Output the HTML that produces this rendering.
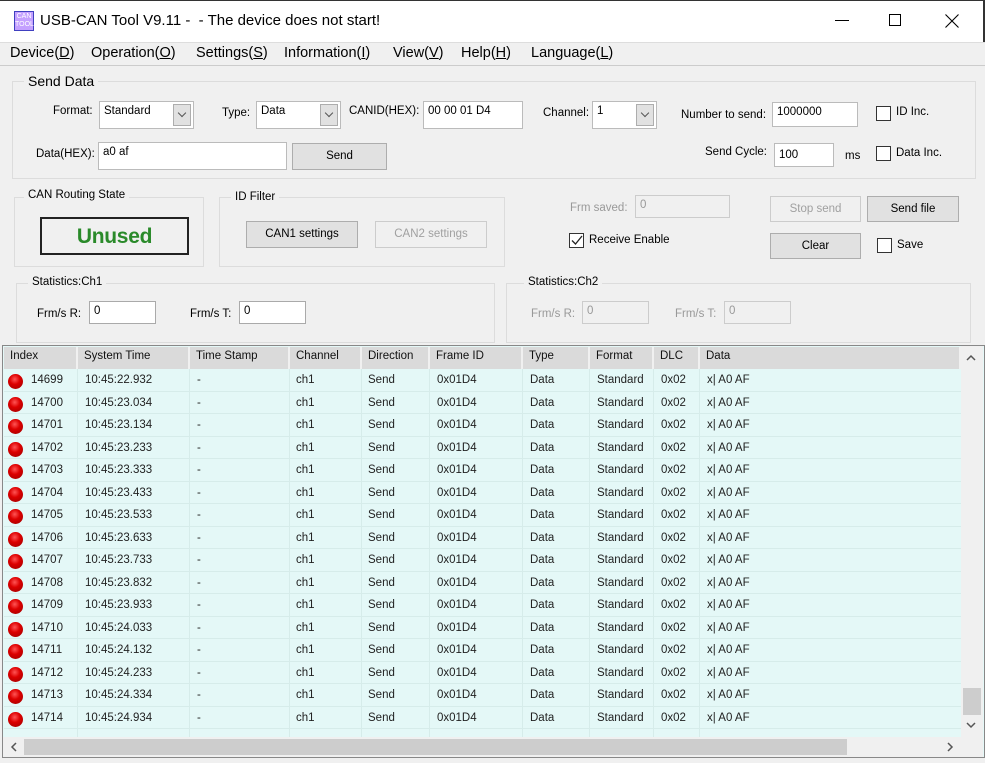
<!DOCTYPE html>
<html><head><meta charset="utf-8"><style>
*{box-sizing:border-box;margin:0;padding:0}
body{width:985px;height:763px;background:#f0f0f0;font-family:"Liberation Sans",Arial,sans-serif;font-size:12px;color:#000;position:relative;overflow:hidden}
.a{position:absolute;white-space:nowrap}
.t{font-size:11.5px}
.gb{position:absolute;border:1px solid #dcdcdc}
.gl{position:absolute;background:#f0f0f0;padding:0 4px;font-size:11.5px;white-space:nowrap}
.in{position:absolute;background:#fff;border:1px solid #7a7a7a;font-size:11.5px;padding:3px 4px;white-space:nowrap}
.dis{position:absolute;background:#f0f0f0;border:1px solid #ccc;color:#999;font-size:11.5px;padding:3px 4px}
.btn{position:absolute;background:#e1e1e1;border:1px solid #adadad;font-size:11.5px;text-align:center;white-space:nowrap}
.btnd{position:absolute;background:#f0f0f0;border:1px solid #ccc;color:#a0a0a0;font-size:11.5px;text-align:center}
.dd{position:absolute;top:2px;right:2px;width:18px;border:1px solid #adadad;background:#e1e1e1}
.dd:after{content:"";position:absolute;left:5px;top:5px;width:5px;height:5px;border-right:1px solid #555;border-bottom:1px solid #555;transform:rotate(45deg)}
.cb{position:absolute;width:15px;height:15px;border:1px solid #333;background:#fff}
.row{position:absolute;left:4px;width:957px;height:22.5px;border-bottom:1px solid #d6ecea;font-size:11.5px;color:#222}
.row span{position:absolute;top:5px}
.dot{position:absolute;left:4px;top:5px;width:15px;height:15px;border-radius:50%;background:radial-gradient(circle at 45% 35%,#f55 0,#d00 40%,#900 100%)}
.hd{position:absolute;top:347px;height:22px;background:#dadada;font-size:11.5px;color:#111;padding:3px 6px;border-right:2px solid #f0f0f0}
</style></head><body>
<div class="a" style="left:0;top:0;width:985px;height:42px;background:#fff;border-top:1px solid #333;border-right:2px solid #333"></div>
<div class="a" style="left:14px;top:11px;width:20px;height:20px;background:#c4a0ff;border:1px solid #4040c0;font-size:7px;color:#fff;line-height:8px;text-align:center;padding-top:1px">CAN<br>TOOL</div>
<div class="a" style="left:40px;top:12px;font-size:15px">USB-CAN Tool V9.11 -&nbsp; - The device does not start!</div>
<div class="a" style="left:835px;top:20px;width:14px;height:1px;background:#000"></div>
<div class="a" style="left:889px;top:14px;width:12px;height:12px;border:1px solid #000"></div>
<svg class="a" style="left:945px;top:14px" width="14" height="14"><path d="M0.5 0.5L13.5 13.5M13.5 0.5L0.5 13.5" stroke="#000" stroke-width="1.1"/></svg>
<div class="a" style="left:0;top:42px;width:985px;height:24px;background:#f0f0f0;border-top:1px solid #ddd;border-bottom:1px solid #ccc"></div>
<div class="a" style="left:10px;top:45px;font-size:14.5px;word-spacing:0">Device(<u>D</u>)</div>
<div class="a" style="left:91px;top:45px;font-size:14.5px">Operation(<u>O</u>)</div>
<div class="a" style="left:196px;top:45px;font-size:14.5px">Settings(<u>S</u>)</div>
<div class="a" style="left:284px;top:45px;font-size:14.5px">Information(<u>I</u>)</div>
<div class="a" style="left:393px;top:45px;font-size:14.5px">View(<u>V</u>)</div>
<div class="a" style="left:461px;top:45px;font-size:14.5px">Help(<u>H</u>)</div>
<div class="a" style="left:531px;top:45px;font-size:14.5px">Language(<u>L</u>)</div>

<div class="gb" style="left:12px;top:81px;width:964px;height:98px"></div>
<div class="gl" style="left:24px;top:73px;font-size:14px">Send Data</div>
<div class="a t" style="left:53px;top:105px">Format:</div>
<div class="in" style="left:99px;top:101px;width:95px;height:28px;border-color:#bbb">Standard<div class="dd" style="height:22px"></div></div>
<div class="a t" style="left:222px;top:107px">Type:</div>
<div class="in" style="left:256px;top:101px;width:85px;height:28px;border-color:#bbb">Data<div class="dd" style="height:22px"></div></div>
<div class="a t" style="left:349px;top:105px">CANID(HEX):</div>
<div class="in" style="left:423px;top:101px;width:100px;height:28px;border-color:#bbb">00 00 01 D4</div>
<div class="a t" style="left:543px;top:107px">Channel:</div>
<div class="in" style="left:592px;top:101px;width:65px;height:28px;border-color:#bbb">1<div class="dd" style="height:22px"></div></div>
<div class="a t" style="left:681px;top:109px">Number to send:</div>
<div class="in" style="left:772px;top:102px;width:86px;height:25px;border-color:#bbb">1000000</div>
<div class="cb" style="left:876px;top:106px"></div><div class="a t" style="left:896px;top:106px">ID Inc.</div>
<div class="a t" style="left:36px;top:148px">Data(HEX):</div>
<div class="in" style="left:98px;top:142px;width:189px;height:28px;border-color:#bbb">a0 af</div>
<div class="btn" style="left:292px;top:143px;width:95px;height:27px;padding-top:6px">Send</div>
<div class="a t" style="left:705px;top:146px">Send Cycle:</div>
<div class="in" style="left:774px;top:143px;width:60px;height:24px;border-color:#bbb;padding-top:5px">100</div>
<div class="a t" style="left:845px;top:150px">ms</div>
<div class="cb" style="left:876px;top:146px"></div><div class="a t" style="left:896px;top:147px">Data Inc.</div>

<div class="gb" style="left:14px;top:197px;width:190px;height:70px"></div>
<div class="gl" style="left:24px;top:189px">CAN Routing State</div>
<div class="a" style="left:40px;top:217px;width:149px;height:38px;border:2px solid #222;color:#2a8a2a;font-weight:bold;font-size:21px;text-align:center;padding-top:6px;font-family:'Liberation Sans',sans-serif;letter-spacing:-0.3px">Unused</div>
<div class="gb" style="left:219px;top:197px;width:286px;height:70px"></div>
<div class="gl" style="left:231px;top:191px">ID Filter</div>
<div class="btn" style="left:246px;top:221px;width:112px;height:27px;padding-top:6px">CAN1 settings</div>
<div class="btnd" style="left:375px;top:221px;width:112px;height:27px;padding-top:6px">CAN2 settings</div>

<div class="a t" style="left:570px;top:202px;color:#999">Frm saved:</div>
<div class="dis" style="left:635px;top:195px;width:95px;height:23px">0</div>
<div class="cb" style="left:569px;top:233px;border-color:#333"></div>
<svg class="a" style="left:571px;top:235px" width="12" height="11"><path d="M1 5.5L4.5 9L11 1" stroke="#222" stroke-width="1.3" fill="none"/></svg>
<div class="a t" style="left:589px;top:234px">Receive Enable</div>
<div class="btnd" style="left:770px;top:196px;width:91px;height:26px;padding-top:6px">Stop send</div>
<div class="btn" style="left:867px;top:196px;width:92px;height:26px;padding-top:6px">Send file</div>
<div class="btn" style="left:770px;top:233px;width:91px;height:26px;padding-top:6px">Clear</div>
<div class="cb" style="left:877px;top:238px"></div><div class="a t" style="left:897px;top:239px">Save</div>

<div class="gb" style="left:16px;top:283px;width:479px;height:60px"></div>
<div class="gl" style="left:28px;top:276px">Statistics:Ch1</div>
<div class="a t" style="left:37px;top:308px">Frm/s R:</div>
<div class="in" style="left:89px;top:301px;width:67px;height:23px;border-color:#aaa">0</div>
<div class="a t" style="left:190px;top:308px">Frm/s T:</div>
<div class="in" style="left:239px;top:301px;width:67px;height:23px;border-color:#aaa">0</div>
<div class="gb" style="left:506px;top:283px;width:465px;height:60px"></div>
<div class="gl" style="left:524px;top:276px">Statistics:Ch2</div>
<div class="a t" style="left:531px;top:308px;color:#999">Frm/s R:</div>
<div class="dis" style="left:582px;top:301px;width:67px;height:23px">0</div>
<div class="a t" style="left:675px;top:308px;color:#999">Frm/s T:</div>
<div class="dis" style="left:724px;top:301px;width:67px;height:23px">0</div>

<div class="a" style="left:2px;top:345px;width:983px;height:413px;border:1px solid #888;background:#e4f8f7"></div>
<div class="hd" style="left:4px;width:74px">Index</div>
<div class="hd" style="left:78px;width:112px">System Time</div>
<div class="hd" style="left:190px;width:100px">Time Stamp</div>
<div class="hd" style="left:290px;width:72px">Channel</div>
<div class="hd" style="left:362px;width:68px">Direction</div>
<div class="hd" style="left:430px;width:93px">Frame ID</div>
<div class="hd" style="left:523px;width:67px">Type</div>
<div class="hd" style="left:590px;width:64px">Format</div>
<div class="hd" style="left:654px;width:46px">DLC</div>
<div class="hd" style="left:700px;width:261px">Data</div>
<div class="a" style="left:961px;top:346px;width:22px;height:391px;background:#f0f0f0"></div>
<svg class="a" style="left:966px;top:354px" width="10" height="8"><path d="M1 6L5 2L9 6" stroke="#555" stroke-width="1.5" fill="none"/></svg>
<div class="a" style="left:963px;top:688px;width:18px;height:27px;background:#cdcdcd"></div>
<svg class="a" style="left:966px;top:721px" width="10" height="8"><path d="M1 2L5 6L9 2" stroke="#555" stroke-width="1.5" fill="none"/></svg>
<div class="a" style="left:3px;top:737px;width:980px;height:20px;background:#f0f0f0"></div>
<div class="a" style="left:24px;top:739px;width:823px;height:16px;background:#cdcdcd"></div>
<svg class="a" style="left:10px;top:742px" width="8" height="10"><path d="M6 1L2 5L6 9" stroke="#555" stroke-width="1.5" fill="none"/></svg>
<svg class="a" style="left:946px;top:742px" width="8" height="10"><path d="M2 1L6 5L2 9" stroke="#555" stroke-width="1.5" fill="none"/></svg>

<div id="rows">
<div class="row" style="top:369px"><div class="dot"></div><span style="left:27px">14699</span><span style="left:81px">10:45:22.932</span><span style="left:193px">-</span><span style="left:292px">ch1</span><span style="left:364px">Send</span><span style="left:433px">0x01D4</span><span style="left:526px">Data</span><span style="left:593px">Standard</span><span style="left:657px">0x02</span><span style="left:703px">x| A0 AF</span></div>
<div class="row" style="top:391.5px"><div class="dot"></div><span style="left:27px">14700</span><span style="left:81px">10:45:23.034</span><span style="left:193px">-</span><span style="left:292px">ch1</span><span style="left:364px">Send</span><span style="left:433px">0x01D4</span><span style="left:526px">Data</span><span style="left:593px">Standard</span><span style="left:657px">0x02</span><span style="left:703px">x| A0 AF</span></div>
<div class="row" style="top:414px"><div class="dot"></div><span style="left:27px">14701</span><span style="left:81px">10:45:23.134</span><span style="left:193px">-</span><span style="left:292px">ch1</span><span style="left:364px">Send</span><span style="left:433px">0x01D4</span><span style="left:526px">Data</span><span style="left:593px">Standard</span><span style="left:657px">0x02</span><span style="left:703px">x| A0 AF</span></div>
<div class="row" style="top:436.5px"><div class="dot"></div><span style="left:27px">14702</span><span style="left:81px">10:45:23.233</span><span style="left:193px">-</span><span style="left:292px">ch1</span><span style="left:364px">Send</span><span style="left:433px">0x01D4</span><span style="left:526px">Data</span><span style="left:593px">Standard</span><span style="left:657px">0x02</span><span style="left:703px">x| A0 AF</span></div>
<div class="row" style="top:459px"><div class="dot"></div><span style="left:27px">14703</span><span style="left:81px">10:45:23.333</span><span style="left:193px">-</span><span style="left:292px">ch1</span><span style="left:364px">Send</span><span style="left:433px">0x01D4</span><span style="left:526px">Data</span><span style="left:593px">Standard</span><span style="left:657px">0x02</span><span style="left:703px">x| A0 AF</span></div>
<div class="row" style="top:481.5px"><div class="dot"></div><span style="left:27px">14704</span><span style="left:81px">10:45:23.433</span><span style="left:193px">-</span><span style="left:292px">ch1</span><span style="left:364px">Send</span><span style="left:433px">0x01D4</span><span style="left:526px">Data</span><span style="left:593px">Standard</span><span style="left:657px">0x02</span><span style="left:703px">x| A0 AF</span></div>
<div class="row" style="top:504px"><div class="dot"></div><span style="left:27px">14705</span><span style="left:81px">10:45:23.533</span><span style="left:193px">-</span><span style="left:292px">ch1</span><span style="left:364px">Send</span><span style="left:433px">0x01D4</span><span style="left:526px">Data</span><span style="left:593px">Standard</span><span style="left:657px">0x02</span><span style="left:703px">x| A0 AF</span></div>
<div class="row" style="top:526.5px"><div class="dot"></div><span style="left:27px">14706</span><span style="left:81px">10:45:23.633</span><span style="left:193px">-</span><span style="left:292px">ch1</span><span style="left:364px">Send</span><span style="left:433px">0x01D4</span><span style="left:526px">Data</span><span style="left:593px">Standard</span><span style="left:657px">0x02</span><span style="left:703px">x| A0 AF</span></div>
<div class="row" style="top:549px"><div class="dot"></div><span style="left:27px">14707</span><span style="left:81px">10:45:23.733</span><span style="left:193px">-</span><span style="left:292px">ch1</span><span style="left:364px">Send</span><span style="left:433px">0x01D4</span><span style="left:526px">Data</span><span style="left:593px">Standard</span><span style="left:657px">0x02</span><span style="left:703px">x| A0 AF</span></div>
<div class="row" style="top:571.5px"><div class="dot"></div><span style="left:27px">14708</span><span style="left:81px">10:45:23.832</span><span style="left:193px">-</span><span style="left:292px">ch1</span><span style="left:364px">Send</span><span style="left:433px">0x01D4</span><span style="left:526px">Data</span><span style="left:593px">Standard</span><span style="left:657px">0x02</span><span style="left:703px">x| A0 AF</span></div>
<div class="row" style="top:594px"><div class="dot"></div><span style="left:27px">14709</span><span style="left:81px">10:45:23.933</span><span style="left:193px">-</span><span style="left:292px">ch1</span><span style="left:364px">Send</span><span style="left:433px">0x01D4</span><span style="left:526px">Data</span><span style="left:593px">Standard</span><span style="left:657px">0x02</span><span style="left:703px">x| A0 AF</span></div>
<div class="row" style="top:616.5px"><div class="dot"></div><span style="left:27px">14710</span><span style="left:81px">10:45:24.033</span><span style="left:193px">-</span><span style="left:292px">ch1</span><span style="left:364px">Send</span><span style="left:433px">0x01D4</span><span style="left:526px">Data</span><span style="left:593px">Standard</span><span style="left:657px">0x02</span><span style="left:703px">x| A0 AF</span></div>
<div class="row" style="top:639px"><div class="dot"></div><span style="left:27px">14711</span><span style="left:81px">10:45:24.132</span><span style="left:193px">-</span><span style="left:292px">ch1</span><span style="left:364px">Send</span><span style="left:433px">0x01D4</span><span style="left:526px">Data</span><span style="left:593px">Standard</span><span style="left:657px">0x02</span><span style="left:703px">x| A0 AF</span></div>
<div class="row" style="top:661.5px"><div class="dot"></div><span style="left:27px">14712</span><span style="left:81px">10:45:24.233</span><span style="left:193px">-</span><span style="left:292px">ch1</span><span style="left:364px">Send</span><span style="left:433px">0x01D4</span><span style="left:526px">Data</span><span style="left:593px">Standard</span><span style="left:657px">0x02</span><span style="left:703px">x| A0 AF</span></div>
<div class="row" style="top:684px"><div class="dot"></div><span style="left:27px">14713</span><span style="left:81px">10:45:24.334</span><span style="left:193px">-</span><span style="left:292px">ch1</span><span style="left:364px">Send</span><span style="left:433px">0x01D4</span><span style="left:526px">Data</span><span style="left:593px">Standard</span><span style="left:657px">0x02</span><span style="left:703px">x| A0 AF</span></div>
<div class="row" style="top:706.5px"><div class="dot"></div><span style="left:27px">14714</span><span style="left:81px">10:45:24.934</span><span style="left:193px">-</span><span style="left:292px">ch1</span><span style="left:364px">Send</span><span style="left:433px">0x01D4</span><span style="left:526px">Data</span><span style="left:593px">Standard</span><span style="left:657px">0x02</span><span style="left:703px">x| A0 AF</span></div>
</div>
<div class="a" style="left:77px;top:369px;width:1px;height:368px;background:#d6ecea"></div>
<div class="a" style="left:189px;top:369px;width:1px;height:368px;background:#d6ecea"></div>
<div class="a" style="left:289px;top:369px;width:1px;height:368px;background:#d6ecea"></div>
<div class="a" style="left:361px;top:369px;width:1px;height:368px;background:#d6ecea"></div>
<div class="a" style="left:429px;top:369px;width:1px;height:368px;background:#d6ecea"></div>
<div class="a" style="left:522px;top:369px;width:1px;height:368px;background:#d6ecea"></div>
<div class="a" style="left:589px;top:369px;width:1px;height:368px;background:#d6ecea"></div>
<div class="a" style="left:653px;top:369px;width:1px;height:368px;background:#d6ecea"></div>
<div class="a" style="left:699px;top:369px;width:1px;height:368px;background:#d6ecea"></div>
</body></html>
